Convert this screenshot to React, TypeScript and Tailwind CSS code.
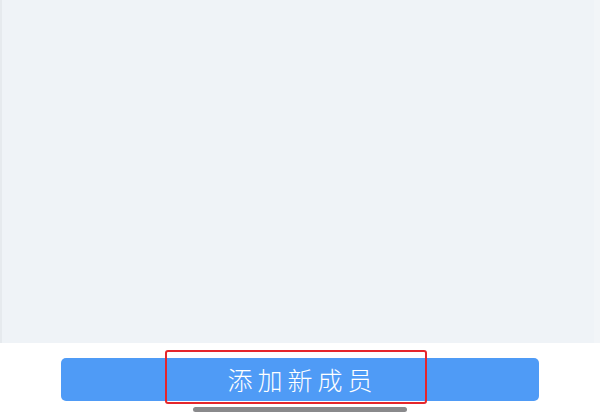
import React from 'react';

const App: React.FC = () => {
  return (
    <div className="relative w-[600px] h-[420px] overflow-hidden bg-white font-['Noto_Sans_CJK_SC',sans-serif]">
      {/* list area (empty) */}
      <div className="h-[343px] bg-[#eff3f7] border-l-2 border-l-[#e6eaee] border-r-[6px] border-r-[#f2f5f8]" />

      {/* footer */}
      <div className="flex flex-col items-center">
        <button className="mt-[15px] w-[478px] h-[43px] rounded-[5px] bg-[#4f9bf6] text-white text-[25px] font-light tracking-[5px] pl-[5px] flex items-center justify-center">
          添加新成员
        </button>
        <div className="mt-[6px] w-[214px] h-[5px] rounded-full bg-[#8a8a8c]" />
      </div>

      {/* annotation box */}
      <div className="absolute left-[165px] top-[350px] w-[262px] h-[54px] border-2 border-[#e5262b] rounded-[3px]" />
    </div>
  );
};

export default App;
